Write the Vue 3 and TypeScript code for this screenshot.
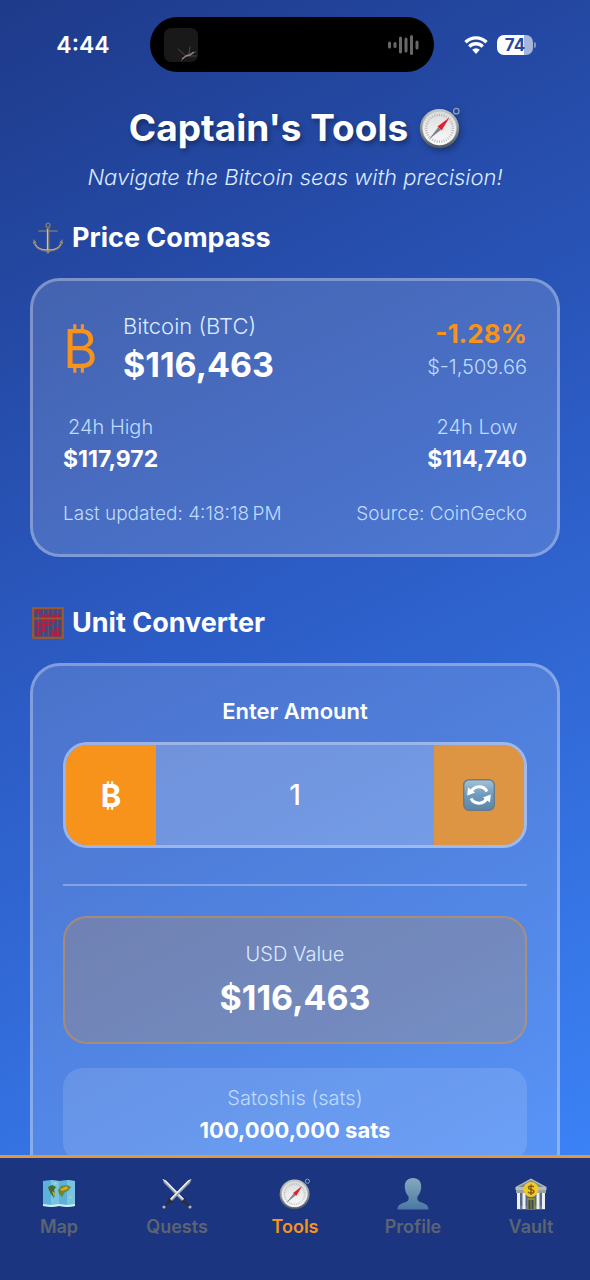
<script setup lang="ts">
import { computed, ref } from 'vue'

interface Tab {
  id: string
  label: string
}

const price = 116463
const amount = ref('1')
const activeTab = ref('tools')

const tabs: Tab[] = [
  { id: 'map', label: 'Map' },
  { id: 'quests', label: 'Quests' },
  { id: 'tools', label: 'Tools' },
  { id: 'profile', label: 'Profile' },
  { id: 'vault', label: 'Vault' },
]

const numeric = computed(() => Number(amount.value) || 0)
const usdValue = computed(() => '$' + Math.round(numeric.value * price).toLocaleString('en-US'))
const satsValue = computed(() => Math.round(numeric.value * 1e8).toLocaleString('en-US') + ' sats')

const ticks = Array.from({ length: 36 }, (_, i) => i * 10)
const waveBars = [
  { x: 0, h: 7 },
  { x: 5.5, h: 6 },
  { x: 11, h: 17 },
  { x: 16.5, h: 15 },
  { x: 22, h: 20 },
  { x: 27.5, h: 9 },
]
</script>

<template>
  <div class="app">
    <svg class="defs" aria-hidden="true">
      <defs>
        <linearGradient id="rim" x1="0" y1="0" x2="0" y2="1">
          <stop offset="0" stop-color="#c3c8cb" />
          <stop offset="1" stop-color="#4d565f" />
        </linearGradient>
        <linearGradient id="face" x1="0" y1="0" x2="0" y2="1">
          <stop offset="0" stop-color="#dcdddc" />
          <stop offset="1" stop-color="#fbfbfb" />
        </linearGradient>
        <symbol id="compass" viewBox="0 0 40 40">
          <circle cx="35.5" cy="4" r="2.6" fill="none" stroke="#8fa0b8" stroke-width="1.2" />
          <circle cx="19.5" cy="20.5" r="18.7" fill="url(#rim)" />
          <circle cx="19.5" cy="20" r="16.6" fill="#c3c6c8" />
          <circle cx="19.5" cy="20.3" r="15.8" fill="url(#face)" />
          <g stroke="#9b9fa2" stroke-width="0.6">
            <line v-for="t in ticks" :key="t" x1="19.5" y1="6.3" x2="19.5" y2="8.8" :transform="`rotate(${t} 19.5 20.3)`" />
          </g>
          <path d="M18.3 19.3L20.7 21.9L9 31.2Z" fill="#7d8388" />
          <path d="M17.6 18.6L29 10L21.5 22.5Z" fill="#e0202c" />
        </symbol>
      </defs>
    </svg>

    <div class="screen">
      <div class="status">
        <time class="clock">4:44</time>
        <div class="island">
          <svg class="artwork" viewBox="0 0 34 34" aria-hidden="true">
            <rect width="34" height="34" rx="7" fill="#19191a" />
            <path d="M17 33L22 28L24 26L32 24M22 28L14 21M25 25L26 19M25 28L32 28" fill="none" stroke="#4f4744" stroke-width="1" stroke-linecap="round" />
            <path d="M18 31L22 28L26 27L30 24" fill="none" stroke="#96857e" stroke-width="1.4" />
          </svg>
          <svg class="wave" viewBox="0 0 32 20" aria-hidden="true">
            <rect v-for="b in waveBars" :key="b.x" :x="b.x" :y="10 - b.h / 2" width="3" :height="b.h" rx="1.5" fill="#68686a" />
          </svg>
        </div>
        <div class="signals">
          <svg class="wifi" viewBox="0 0 24 20" role="img" aria-label="Wi-Fi">
            <g fill="none" stroke="#fff" stroke-width="3.4">
              <path d="M1.5 7.200A15 15 0 0 1 22.500 7.200" />
              <path d="M5.300 11.600A9.400 9.400 0 0 1 18.700 11.600" />
            </g>
            <path d="M8.200 14.800A5.400 5.400 0 0 1 15.800 14.800L12 19Z" fill="#fff" />
          </svg>
          <div class="battery"><span class="level">74</span></div>
        </div>
      </div>

      <header class="masthead">
        <h1>
          Captain's Tools
          <svg class="compass-lg" aria-hidden="true"><use href="#compass" /></svg>
        </h1>
        <p>Navigate the Bitcoin seas with precision!</p>
      </header>

      <section>
        <h2>
          <svg class="emoji" viewBox="0 0 32 32" aria-hidden="true">
            <g fill="none" stroke="#77766f" stroke-linecap="round">
              <circle cx="16" cy="3.200" r="2" stroke-width="1.500" />
              <path d="M7 9H25" stroke-width="1.500" />
              <path d="M16 6V30" stroke-width="2.800" />
              <path d="M2.500 20C3 26 9 28.600 16 28.600S29 26 29.500 20" stroke-width="2.200" />
            </g>
            <path d="M15.600 7V28" stroke="#d8c8a4" stroke-width="1" />
            <path d="M3.500 22.500C6 27 11 27.900 16 27.900S26 27 28.500 22.500" fill="none" stroke="#cdbb92" stroke-width="1" />
            <path d="M1 22L1.600 17L4.800 21Z M31 22L30.400 17L27.200 21Z M14 29L16 32L18 29Z" fill="#8d8978" />
          </svg>
          Price Compass
        </h2>
        <div class="card price-card">
          <div class="row quote">
            <span class="coin" aria-hidden="true">₿</span>
            <div class="asset">
              <div class="asset-name">Bitcoin (BTC)</div>
              <div class="big">$116,463</div>
            </div>
            <div class="change">
              <div class="percent">-1.28%</div>
              <div class="delta">$-1,509.66</div>
            </div>
          </div>
          <div class="row stats">
            <div class="stat">
              <div class="caption">24h High</div>
              <div class="figure">$117,972</div>
            </div>
            <div class="stat">
              <div class="caption">24h Low</div>
              <div class="figure">$114,740</div>
            </div>
          </div>
          <div class="row meta">
            <span>Last updated: 4:18:18&#8239;PM</span>
            <span>Source: CoinGecko</span>
          </div>
        </div>
      </section>

      <section class="converter">
        <h2>
          <svg class="emoji" viewBox="0 0 32 32" aria-hidden="true">
            <rect x="1.2" y="1.2" width="29.6" height="29.6" fill="#44477c" stroke="#9c5a2c" stroke-width="2.2" />
            <path d="M1 11.5H31" stroke="#9c5a2c" stroke-width="1.8" />
            <path d="M6.5 3V29M11.5 3V29M16.3 3V29M21 3V29M25.7 3V29" stroke="#7b5a6a" stroke-width="0.8" />
            <g fill="#c41a38">
              <ellipse cx="6.5" cy="4.6" rx="2.3" ry="1.5" />
              <ellipse cx="11.5" cy="8.8" rx="2.2" ry="1.5" />
              <ellipse cx="16.3" cy="8.8" rx="2.2" ry="1.5" />
              <ellipse cx="21" cy="8.8" rx="2.2" ry="1.5" />
              <ellipse cx="25.7" cy="8.8" rx="2.2" ry="1.5" />
              <ellipse cx="6.5" cy="16.5" rx="2.2" ry="1.4" />
              <ellipse cx="6.5" cy="20" rx="2.2" ry="1.4" />
              <ellipse cx="6.5" cy="24.8" rx="2.2" ry="1.4" />
              <ellipse cx="6.5" cy="28" rx="2.2" ry="1.4" />
              <ellipse cx="11.5" cy="14.2" rx="2.2" ry="1.4" />
              <ellipse cx="11.5" cy="17.4" rx="2.2" ry="1.4" />
              <ellipse cx="11.5" cy="20.6" rx="2.2" ry="1.4" />
              <ellipse cx="11.5" cy="23.8" rx="2.2" ry="1.4" />
              <ellipse cx="16.3" cy="14.2" rx="2.2" ry="1.4" />
              <ellipse cx="16.3" cy="17.4" rx="2.2" ry="1.4" />
              <ellipse cx="21" cy="14.2" rx="2.2" ry="1.4" />
              <ellipse cx="21" cy="24.8" rx="2.2" ry="1.4" />
              <ellipse cx="21" cy="28" rx="2.2" ry="1.4" />
              <ellipse cx="25.7" cy="21.6" rx="2.2" ry="1.4" />
              <ellipse cx="25.7" cy="24.8" rx="2.2" ry="1.4" />
              <ellipse cx="25.7" cy="28" rx="2.2" ry="1.4" />
            </g>
          </svg>
          Unit Converter
        </h2>
        <div class="card">
          <label class="amount-label" for="amount">Enter Amount</label>
          <div class="amount">
            <button type="button" class="unit" aria-label="Bitcoin">₿</button>
            <input id="amount" v-model="amount" type="text" inputmode="decimal" />
            <button type="button" class="reset" aria-label="Reset" @click="amount = '1'">
              <svg viewBox="0 0 32 32" aria-hidden="true">
                <defs>
                  <linearGradient id="tile" x1="0" y1="0" x2="0" y2="1">
                    <stop offset="0" stop-color="#a3c3d8" />
                    <stop offset="0.5" stop-color="#6e9bbc" />
                    <stop offset="1" stop-color="#5c85a6" />
                  </linearGradient>
                </defs>
                <rect x="0.7" y="0.7" width="30.6" height="30.6" rx="5.5" fill="url(#tile)" stroke="#6a7a88" stroke-width="1.4" />
                <g fill="none" stroke="#fff" stroke-width="3">
                  <path d="M8 13A9 9 0 0 1 24 12.400" />
                  <path d="M24 19A9 9 0 0 1 8 19.600" />
                </g>
                <path d="M4.200 16.600L5 8.600L12.200 13.400Z M27.800 15.400L27 23.400L19.800 18.600Z" fill="#fff" />
              </svg>
            </button>
          </div>
          <hr />
          <div class="result usd">
            <div class="caption">USD Value</div>
            <div class="big">{{ usdValue }}</div>
          </div>
          <div class="result sats">
            <div class="caption">Satoshis (sats)</div>
            <div class="figure">{{ satsValue }}</div>
          </div>
        </div>
      </section>
    </div>

    <nav class="tabs">
      <button
        v-for="tab in tabs"
        :key="tab.id"
        type="button"
        :class="['tab', { active: tab.id === activeTab }]"
        @click="activeTab = tab.id"
      >
        <svg v-if="tab.id === 'map'" viewBox="0 0 32 32" aria-hidden="true">
          <path d="M0 3L8 2L16 3L24 2L32 3V28L24 29L16 28L8 29L0 28Z" fill="#5cb2d9" />
          <path d="M8 2L16 3V28L8 29Z M24 2L32 3V28L24 29Z" fill="#78c4e2" />
          <path d="M0 26L8 27L16 26L24 27L32 26V28L24 29L16 28L8 29L0 28Z" fill="#d8ebee" />
          <path d="M5 9L9 7L13 9L11 12L12 15L11 20L8 16L6 12Z" fill="#456b2c" />
          <path d="M15 12L18 8L24 7L28 9L25 13L22 14L19 19L16 16Z" fill="#6b8a2e" />
          <path d="M9 13L12 15L11 19Z M17 11L24 8L25 11L19 13Z" fill="#dba92d" />
          <path d="M10 4L14 5L12 7Z M26 18L29 19L27 21Z" fill="#b7d0b2" />
        </svg>
        <svg v-else-if="tab.id === 'quests'" viewBox="0 0 32 32" aria-hidden="true">
          <path d="M1.500 1L5 2.500L24 22L22 24L3 5Z" fill="#9aa3aa" />
          <path d="M1.500 1L5 2.500L24 22L23 23Z" fill="#eef1f3" />
          <path d="M30.500 1L27 2.500L8 22L10 24L29 5Z" fill="#98a1a9" />
          <path d="M30.500 1L27 2.500L8 22L9 23Z" fill="#f4f6f7" />
          <path d="M20.500 25L25 20.500M11.500 25L7 20.500M23 23L28.500 28.500M9 23L3.500 28.500" stroke="#2b2f36" stroke-width="2.400" />
          <circle cx="29" cy="29" r="1.600" fill="#aab0b5" />
          <circle cx="3" cy="29" r="1.600" fill="#aab0b5" />
        </svg>
        <svg v-else-if="tab.id === 'tools'" aria-hidden="true"><use href="#compass" /></svg>
        <svg v-else-if="tab.id === 'profile'" viewBox="0 0 32 32" aria-hidden="true">
          <defs>
            <linearGradient id="bust" x1="0" y1="0" x2="0" y2="1">
              <stop offset="0" stop-color="#86a9bd" />
              <stop offset="1" stop-color="#4a78a4" />
            </linearGradient>
          </defs>
          <path d="M16 0C21.500 0 24.500 3.500 24.200 9C24 13 22.500 16.500 20.500 18.500C20 21.500 20.500 22.800 23 24C27.500 25.500 31.500 26.500 31.500 31.500H0.500C0.500 26.500 4.500 25.500 9 24C11.500 22.800 12 21.500 11.500 18.500C9.500 16.500 8 13 7.800 9C7.500 3.500 10.500 0 16 0Z" fill="url(#bust)" />
        </svg>
        <svg v-else viewBox="0 0 32 32" aria-hidden="true">
          <path d="M2 27H30V31.500H2Z" fill="#6e7f9b" />
          <path d="M0.500 9L16 0.500L31.500 9V12H0.500Z" fill="#b4bdba" />
          <path d="M3 9L16 2L29 9Z" fill="#7e908f" />
          <path d="M2 12H30V28H2Z" fill="#59698a" />
          <path d="M3.500 13V31M9 15V31M23 15V31M28.500 13V31" stroke="#edf0ee" stroke-width="3" />
          <path d="M1 12H31V15H1Z" fill="#98a3a4" />
          <path d="M12 20H20V31.500H12Z" fill="#8b8a3b" />
          <path d="M13.500 22H15.500V31H13.500Z M16.500 22H18.500V31H16.500Z" fill="#3c4c56" />
          <circle cx="16" cy="11.500" r="7.600" fill="#f2ca27" />
          <path d="M18.800 9.200C18 7.600 13.400 7.600 13.400 9.700C13.400 12 18.900 10.800 18.900 13.500C18.900 15.900 13.700 15.800 13.100 13.700M16 6.500V17" fill="none" stroke="#806018" stroke-width="1.500" />
        </svg>
        <span>{{ tab.label }}</span>
      </button>
    </nav>
  </div>
</template>

<style>
html,
body {
  margin: 0;
  background: #1e3a8a;
}
</style>

<style scoped>
.app {
  display: flex;
  flex-direction: column;
  height: 100vh;
  font-family: Inter, 'Liberation Sans', sans-serif;
  color: #fff;
}

.app *,
.app *::before {
  box-sizing: border-box;
}

.defs {
  position: absolute;
  width: 0;
  height: 0;
}

button,
input {
  font-family: inherit;
  margin: 0;
  padding: 0;
  border: 0;
}

.screen {
  flex: 1;
  min-height: 0;
  overflow-y: auto;
  scrollbar-width: none;
  padding: 0 30px;
  background: linear-gradient(153deg, #1e3a8a, #2c5cc5 50%, #3b82f6);
}

.status {
  display: grid;
  grid-template-columns: 150fr 284fr 156fr;
  margin: 0 -30px;
  padding: 17px 0 18px;
  align-items: center;
}

.clock {
  padding-left: 16px;
  text-align: center;
  font-size: 23px;
  font-weight: 600;
}

.island {
  display: flex;
  align-items: center;
  justify-content: space-between;
  height: 55px;
  padding: 0 14px;
  border-radius: 28px;
  background: #000;
}

.artwork {
  width: 34px;
  height: 34px;
}

.wave {
  width: 32px;
  height: 20px;
}

.signals {
  display: flex;
  align-items: center;
  gap: 9px;
  padding-left: 30px;
}

.wifi {
  width: 24px;
  height: 20px;
}

.battery {
  position: relative;
  width: 36px;
  height: 20px;
  border-radius: 7px;
  background: linear-gradient(90deg, #fff 74%, #a5b5dc 74%);
  color: #23489e;
  text-align: center;
}

.battery::before {
  content: '';
  position: absolute;
  left: 37px;
  top: 7px;
  width: 2px;
  height: 6px;
  border-radius: 0 2px 2px 0;
  background: #8196cc;
}

.level {
  display: block;
  font-size: 17px;
  font-weight: 700;
  line-height: 20px;
}

.masthead {
  padding-top: 14px;
  text-align: center;
}

h1 {
  display: flex;
  align-items: center;
  justify-content: center;
  gap: 11px;
  margin: 0;
  font-size: 37px;
  font-weight: 700;
  line-height: 48px;
  text-shadow: 2px 3px 5px rgba(0, 0, 0, 0.35);
}

.compass-lg {
  width: 42px;
  height: 42px;
  filter: drop-shadow(2px 3px 3px rgba(0, 0, 0, 0.3));
}

.masthead p {
  margin: 12px 0 0;
  font-size: 22px;
  font-style: italic;
  font-weight: 300;
  line-height: 26px;
  color: #dbeafe;
}

h2 {
  display: flex;
  align-items: center;
  gap: 8px;
  margin: 31px 0 23px 2px;
  font-size: 27px;
  font-weight: 700;
  line-height: 34px;
}

.converter h2 {
  margin-top: 49px;
}

.emoji {
  width: 32px;
  height: 32px;
}

.card {
  padding: 30px;
  border: 3px solid rgba(255, 255, 255, 0.3);
  border-radius: 30px;
  background: rgba(255, 255, 255, 0.15);
}

.price-card {
  padding-bottom: 28px;
}

.row {
  display: flex;
  justify-content: space-between;
}

.quote {
  align-items: center;
}

.coin {
  width: 60px;
  font-size: 53px;
  line-height: 64px;
  color: #f7931a;
}

.asset {
  flex: 1;
}

.asset-name {
  margin-bottom: 2px;
  font-size: 22px;
  font-weight: 300;
  line-height: 30px;
  color: #dbeafe;
}

.big {
  font-size: 34px;
  font-weight: 700;
  line-height: 44px;
}

.change {
  text-align: right;
}

.percent {
  margin-bottom: 2px;
  font-size: 26px;
  font-weight: 700;
  line-height: 34px;
  color: #f7931a;
}

.delta {
  font-size: 20px;
  font-weight: 300;
  line-height: 28px;
  color: #bfdbfe;
}

.stats {
  margin-top: 26px;
  text-align: center;
}

.caption {
  font-size: 20px;
  font-weight: 300;
  line-height: 28px;
  color: #bfdbfe;
}

.figure {
  margin-top: 2px;
  font-size: 22px;
  font-weight: 700;
  line-height: 32px;
}

.stats .figure {
  font-size: 23px;
}

.meta {
  margin-top: 26px;
  margin-bottom: -1px;
  font-size: 19px;
  font-weight: 300;
  line-height: 26px;
  color: #bfdbfe;
}

.amount-label {
  display: block;
  margin-bottom: 16px;
  text-align: center;
  font-size: 22px;
  font-weight: 600;
  line-height: 30px;
}

.amount {
  display: flex;
  height: 106px;
  overflow: hidden;
  border: 3px solid rgba(255, 255, 255, 0.3);
  border-radius: 24px;
  background: rgba(255, 255, 255, 0.2);
}

.amount button {
  flex: 0 0 90px;
  display: grid;
  place-items: center;
}

.unit {
  background: #f7931a;
  color: #fff;
  font-size: 31px;
  font-weight: 700;
}

.reset {
  background: rgba(247, 147, 26, 0.8);
}

.reset svg {
  width: 32px;
  height: 32px;
}

.amount input {
  flex: 1;
  min-width: 0;
  background: transparent;
  color: #fff;
  text-align: center;
  font-size: 28px;
  font-weight: 500;
  outline: none;
}

hr {
  height: 2px;
  margin: 36px 0 30px;
  border: 0;
  background: rgba(255, 255, 255, 0.3);
}

.result {
  text-align: center;
}

.usd {
  padding: 22px;
  border: 2px solid rgba(247, 147, 26, 0.4);
  border-radius: 24px;
  background: rgba(247, 147, 26, 0.2);
}

.usd .caption {
  margin-bottom: 8px;
  color: #dbeafe;
}

.sats {
  margin-top: 24px;
  padding: 16px;
  border-radius: 20px;
  background: rgba(255, 255, 255, 0.12);
}

.tabs {
  display: grid;
  grid-template-columns: repeat(5, 1fr);
  padding: 20px 0 41px;
  border-top: 3px solid #e5973c;
  background: #1c3580;
}

.tab {
  display: flex;
  flex-direction: column;
  align-items: center;
  gap: 5px;
  background: none;
  color: #5c6472;
  font-size: 18px;
  font-weight: 600;
  line-height: 24px;
}

.tab svg {
  width: 32px;
  height: 32px;
}

.tab.active {
  color: #f7931a;
}
</style>
